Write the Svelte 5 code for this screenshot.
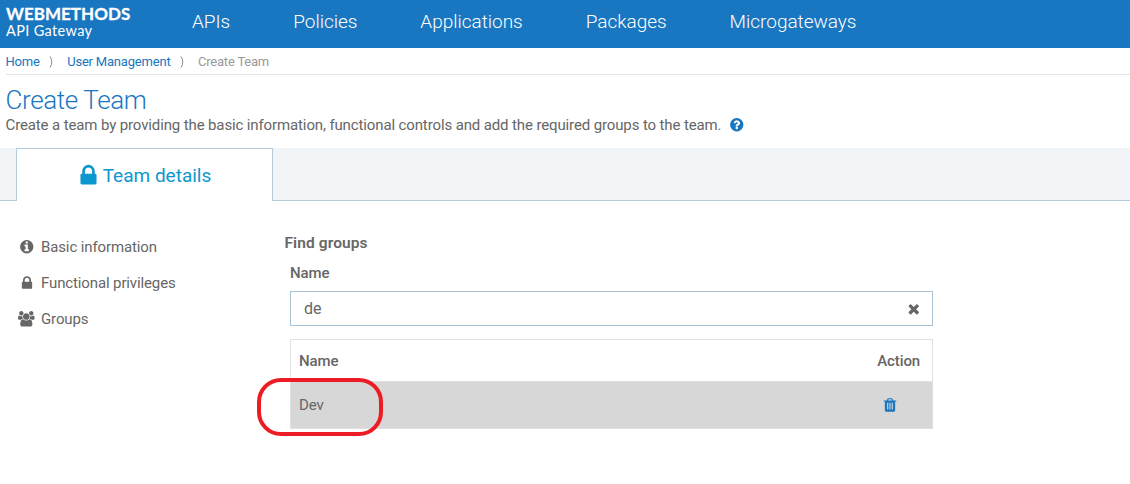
<script>
  const nav = ['APIs', 'Policies', 'Applications', 'Packages', 'Microgateways'];
  const icons = {
    lock: 'M640 768h512v-192q0-106-75-181t-181-75-181 75-75 181v192zm832 96v576q0 40-28 68t-68 28h-960q-40 0-68-28t-28-68v-576q0-40 28-68t68-28h32v-192q0-184 132-316t316-132 316 132 132 316v192h32q40 0 68 28t28 68z',
    info: 'M1152 1376v-160q0-14-9-23t-23-9h-96v-512q0-14-9-23t-23-9h-320q-14 0-23 9t-9 23v160q0 14 9 23t23 9h96v320h-96q-14 0-23 9t-9 23v160q0 14 9 23t23 9h448q14 0 23-9t9-23zm-128-896v-160q0-14-9-23t-23-9h-192q-14 0-23 9t-9 23v160q0 14 9 23t23 9h192q14 0 23-9t9-23zm640 416q0 209-103 385.5t-279.5 279.5-385.5 103-385.5-103-279.5-279.5-103-385.5 103-385.5 279.5-279.5 385.5-103 385.5 103 279.5 279.5 103 385.5z',
    help: 'M1024 1376v-192q0-14-9-23t-23-9h-192q-14 0-23 9t-9 23v192q0 14 9 23t23 9h192q14 0 23-9t9-23zm256-672q0-88-55.5-163t-138.5-116-170-41q-243 0-371 213-15 24 8 42l132 100q7 6 19 6 16 0 25-12 53-68 86-92 34-24 86-24 48 0 85.5 26t37.5 59q0 38-20 61t-68 45q-63 28-115.5 86.5t-52.5 125.5v36q0 14 9 23t23 9h192q14 0 23-9t9-23q0-19 21.5-49.5t54.5-49.5q32-18 49-28.5t46-35 44.5-48 28-60.5 12.5-81zm384 192q0 209-103 385.5t-279.5 279.5-385.5 103-385.5-103-279.5-279.5-103-385.5 103-385.5 279.5-279.5 385.5-103 385.5 103 279.5 279.5 103 385.5z',
    clear: 'M1490 1322q0 40-28 68l-136 136q-28 28-68 28t-68-28l-294-294-294 294q-28 28-68 28t-68-28l-136-136q-28-28-28-68t28-68l294-294-294-294q-28-28-28-68t28-68l136-136q28-28 68-28t68 28l294 294 294-294q28-28 68-28t68 28l136 136q28 28 28 68t-28 68l-294 294 294 294q28 28 28 68z',
    trash: 'M704 1376v-704q0-14-9-23t-23-9h-64q-14 0-23 9t-9 23v704q0 14 9 23t23 9h64q14 0 23-9t9-23zm256 0v-704q0-14-9-23t-23-9h-64q-14 0-23 9t-9 23v704q0 14 9 23t23 9h64q14 0 23-9t9-23zm256 0v-704q0-14-9-23t-23-9h-64q-14 0-23 9t-9 23v704q0 14 9 23t23 9h64q14 0 23-9t9-23zm-544-992h448l-48-117q-7-9-17-11h-317q-10 2-17 11zm928 32v64q0 14-9 23t-23 9h-96v948q0 83-47 143.5t-113 60.5h-832q-66 0-113-58.5t-47-141.5v-952h-96q-14 0-23-9t-9-23v-64q0-14 9-23t23-9h309l70-167q15-37 54-63t79-26h320q40 0 79 26t54 63l70 167h309q14 0 23 9t9 23z',
    users: 'M593 896q-162 5-265 128h-134q-82 0-138-40.5t-56-118.5q0-353 124-353 6 0 43.5 21t97.5 42.5 119 21.5q67 0 133-23-5 37-5 66 0 139 81 256zm1071 637q0 120-73 189.5t-194 69.5h-874q-121 0-194-69.5t-73-189.5q0-53 3.5-103.5t14-109 26.5-108.5 43-97.5 62-81 85.5-53.5 111.5-20q10 0 43 21.5t73 48 107 48 135 21.5 135-21.5 107-48 73-48 43-21.5q61 0 111.5 20t85.5 53.5 62 81 43 97.5 26.5 108.5 14 109 3.5 103.5zm-1024-1277q0 106-75 181t-181 75-181-75-75-181 75-181 181-75 181 75 75 181zm704 384q0 159-112.5 271.5t-271.5 112.5-271.5-112.5-112.5-271.5 112.5-271.5 271.5-112.5 271.5 112.5 112.5 271.5zm576 225q0 78-56 118.5t-138 40.5h-134q-103-123-265-128 81-117 81-256 0-29-5-66 66 23 133 23 59 0 119-21.5t97.5-42.5 43.5-21q124 0 124 353zm-128-609q0 106-75 181t-181 75-181-75-75-181 75-181 181-75 181 75 75 181z'
  };
  const sections = [
    { label: 'Basic information', icon: 'info', size: 15.5 },
    { label: 'Functional privileges', icon: 'lock', size: 16 },
    { label: 'Groups', icon: 'users', size: 15.5 }
  ];
</script>

{#snippet icon(name, size)}
  <svg class="icon" height={size} width={name === 'users' ? (size * 1920) / 1792 : size} viewBox={name === 'users' ? '0 0 1920 1792' : '0 0 1792 1792'} aria-hidden="true"><path d={icons[name]} fill="currentColor" /></svg>
{/snippet}

<div class="page">
  <header>
    <div class="brand"><strong>WEBMETHODS</strong><span>API Gateway</span></div>
    <nav>
      {#each nav as item}<span>{item}</span>{/each}
    </nav>
  </header>

  <div class="crumbs">
    <span class="link">Home</span>
    <svg class="sep" width="5" height="12" viewBox="0 0 5 12"><path d="M1 .5Q4.6 6 1 11.5" /></svg>
    <span class="link">User Management</span>
    <svg class="sep" width="5" height="12" viewBox="0 0 5 12"><path d="M1 .5Q4.6 6 1 11.5" /></svg>
    <span class="current">Create Team</span>
  </div>

  <h1>Create Team</h1>
  <p class="intro">
    <span>Create a team by providing the basic information, functional controls and add the required groups to the team.</span>
    <span class="help">{@render icon('help', 15.5)}</span>
  </p>

  <div class="tabs">
    <div class="tab">{@render icon('lock', 25)}<span>Team details</span></div>
    <div class="rest"></div>
  </div>

  <main>
    <aside>
      {#each sections as s}
        <div class="section"><span class="mark">{@render icon(s.icon, s.size)}</span><span>{s.label}</span></div>
      {/each}
    </aside>
    <section class="groups">
      <h2>Find groups</h2>
      <div class="inner">
        <div class="label">Name</div>
        <div class="field"><span>de</span>{@render icon('clear', 15.5)}</div>
        <div class="table">
          <div class="row head"><span>Name</span><span>Action</span></div>
          <div class="row data">
            <span>Dev</span><span class="action">{@render icon('trash', 16)}</span>
            <div class="ring"></div>
          </div>
        </div>
      </div>
    </section>
  </main>
</div>

<style>
  :global(body) { background: #fff; }
  * { box-sizing: border-box; }
  .page { width: 1130px; height: 484px; overflow: hidden; font: 15px/20px Roboto, sans-serif; letter-spacing: -0.125px; color: #666; background: #fff; }
  .icon { display: block; flex: none; }
  header { height: 48px; background: #1976c0; color: #fff; display: flex; }
  .brand { width: 192px; padding: 5px 0 0 6px; display: flex; flex-direction: column; font-family: Lato, sans-serif; }
  .brand strong { font-size: 17px; line-height: 18px; font-weight: 700; letter-spacing: 0.03px; -webkit-text-stroke: 0.3px #fff; }
  .brand span { font-size: 14.5px; line-height: 15px; letter-spacing: 0.35px; }
  nav { display: flex; gap: 63px; font-size: 19px; line-height: 43px; font-weight: 300; letter-spacing: -0.02px; }
  .crumbs { margin-left: 5.5px; height: 27px; border-bottom: 1px solid #dfe6ec; display: flex; align-items: center; font-size: 13px; letter-spacing: -0.2px; }
  .crumbs span { position: relative; top: 0.5px; }
  .link { color: #1976c0; }
  .sep { margin: 1px 13px 0 9.5px; fill: none; stroke: #8c8c8c; }
  .current { color: #999; }
  h1 { margin: 9px 0 0 5.5px; font-size: 26px; line-height: 32px; font-weight: 300; letter-spacing: -0.38px; color: #1976c0; }
  .intro { margin: 0 0 0 5.5px; height: 32px; display: flex; align-items: flex-start; }
  .intro > span:first-child { line-height: 18px; }
  .help { color: #1976c0; margin: 1px 0 0 8px; }
  .tabs { display: flex; height: 53px; background: #f1f5f8; }
  .tabs::before { content: ''; width: 16px; border-bottom: 1px solid #b4cbdc; }
  .tab { width: 257px; padding-right: 2px; background: #fff; border: 1px solid #b4cbdc; border-bottom: 0; display: flex; justify-content: center; align-items: center; color: #0d97cf; font-size: 19px; letter-spacing: 0; }
  .tab span { margin: 1px 0 0 2px; }
  .rest { flex: 1; border-bottom: 1px solid #b4cbdc; }
  main { display: flex; }
  aside { width: 284.5px; padding: 28px 0 0 16px; }
  .section { height: 36px; display: flex; align-items: center; }
  .mark { width: 21px; margin-right: 4px; display: flex; justify-content: center; }
  .groups { width: 648.5px; padding-top: 32px; }
  h2 { margin: 0; font-size: 15.5px; line-height: 20px; font-weight: 600; letter-spacing: 0.1px; }
  .inner { padding-left: 5.5px; }
  .label { margin-top: 10px; font-weight: 500; }
  .field { margin-top: 8px; height: 35px; border: 1px solid #a9c3d6; display: flex; align-items: center; justify-content: space-between; padding: 0 11px 0 13px; font-size: 16px; }
  .table { margin-top: 13px; border: 1px solid #e1e1e1; height: 90px; }
  .row { display: flex; align-items: center; justify-content: space-between; padding: 0 12px 0 8px; }
  .head { height: 42px; font-weight: 500; border-bottom: 1px solid #e1e1e1; }
  .data { position: relative; height: 46px; background: #d7d7d7; }
  .action { width: 43px; padding: 0 0 1px 5px; color: #1976c0; }
  .ring { position: absolute; left: -34px; top: -4px; width: 126px; height: 58px; border: 4px solid #ed1c24; border-radius: 24px; }
</style>
